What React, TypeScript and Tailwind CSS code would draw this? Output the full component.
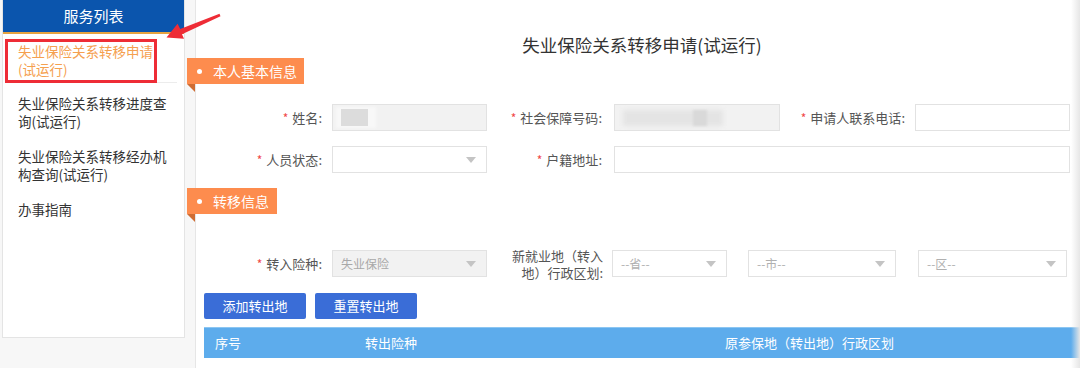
const FONT = "font-['Noto_Sans_CJK_SC',sans-serif]";

function Label({ text, star = true, className = '' }: { text: string; star?: boolean; className?: string }) {
  return (
    <div className={`flex shrink-0 items-center justify-end text-[13px] leading-[16px] text-[#555] ${className}`}>
      {star && <span className="mr-[4px] text-[12px] text-[#f04848]">*</span>}
      <span>{text}:</span>
    </div>
  );
}

function Caret() {
  return (
    <span className="h-0 w-0 border-x-[5px] border-t-[6px] border-x-transparent border-t-[#c4c4c4]" />
  );
}

function Select({ text, disabled = false, className = '' }: { text?: string; disabled?: boolean; className?: string }) {
  return (
    <div
      className={`flex h-[27px] shrink-0 items-center justify-between border border-[#e2e2e2] pl-[8px] pr-[10px] text-[12px] ${
        disabled ? 'bg-[#f2f2f2] text-[#a8a8a8]' : 'bg-white text-[#b0b0b0]'
      } ${className}`}
    >
      <span>{text}</span>
      <Caret />
    </div>
  );
}

function Tag({ text, width }: { text: string; width: string }) {
  return (
    <div className="-ml-[17px] flex flex-col">
      <div className={`flex h-[26px] items-center bg-[#fd8c4e] pl-[10px] text-[14px] text-white ${width}`}>
        <span className="h-[5px] w-[5px] rounded-full bg-white" />
        <span className="ml-[11px] leading-none">{text}</span>
      </div>
      <div className="h-0 w-0 border-t-[8px] border-l-[8px] border-t-[#cf6c33] border-l-transparent" />
    </div>
  );
}

const MENU = [
  '失业保险关系转移进度查询(试运行)',
  '失业保险关系转移经办机构查询(试运行)',
  '办事指南',
];

export default function App() {
  return (
    <div className={`relative flex h-[368px] w-[1080px] overflow-hidden bg-[#f7f7f7] ${FONT}`}>
      <aside className="relative ml-[2px] h-[338px] w-[183px] shrink-0 border-x border-b border-[#e4e4e4] bg-white">
        <div className="flex h-[34px] items-center justify-center border-b-2 border-[#e6a341] bg-[#0b55ad] text-[15px] text-white">
          服务列表
        </div>
        <div className="mx-[7px] border-b border-[#ececec] pt-[8px] pb-[4px] pl-[8px] pr-[9px] text-[13.5px] leading-[18px] text-[#f5a04f]">
          失业保险关系转移申请(试运行)
        </div>
        <div className="mt-[11px] flex flex-col gap-[17px] pl-[15px] pr-[16px] text-[13.5px] leading-[18px] text-[#333]">
          {MENU.map((m) => (
            <div key={m}>{m}</div>
          ))}
        </div>
        <div className="absolute left-[2px] top-[39px] h-[44px] w-[152px] border-[3px] border-[#ee2c36]" />
      </aside>

      <main className="ml-[10px] flex flex-1 flex-col border-l border-[#e6e6e6] bg-white pl-[8px]">
        <h1 className="pt-[34px] text-center text-[17.5px] leading-[22px] text-[#333]">
          失业保险关系转移申请(试运行)
        </h1>

        <div className="mt-[2px]">
          <Tag text="本人基本信息" width="w-[117px]" />
        </div>

        <div className="mt-[12px] flex h-[27px] items-center">
          <Label text="姓名" className="w-[128px] pr-[10px]" />
          <div className="relative h-[27px] w-[155px] shrink-0 border border-[#e2e2e2] bg-[#f2f2f2]">
            <div className="absolute left-[3px] top-[2px] h-[21px] w-[40px] bg-[#f8f8f8] blur-[1px]" />
            <div className="absolute left-[8px] top-[4px] h-[17px] w-[27px] bg-[#dcdcdc]" />
          </div>
          <Label text="社会保障号码" className="w-[127px] pr-[12px]" />
          <div className="relative h-[27px] w-[166px] shrink-0 border border-[#e2e2e2] bg-[#f2f2f2]">
            <div className="absolute left-[8px] top-[5px] h-[16px] w-[100px] bg-[#e4e4e4] blur-[2px]" />
            <div className="absolute left-[78px] top-[5px] h-[16px] w-[14px] bg-[#d9d9d9] blur-[1px]" />
          </div>
          <Label text="申请人联系电话" className="w-[135px] pr-[10px]" />
          <div className="h-[27px] w-[155px] shrink-0 border border-[#e2e2e2] bg-white" />
        </div>

        <div className="mt-[15px] flex h-[27px] items-center">
          <Label text="人员状态" className="w-[128px] pr-[10px]" />
          <Select className="w-[155px]" />
          <Label text="户籍地址" className="w-[127px] pr-[12px]" />
          <div className="h-[27px] w-[456px] shrink-0 border border-[#e2e2e2] bg-white" />
        </div>

        <div className="mt-[15px]">
          <Tag text="转移信息" width="w-[90px]" />
        </div>

        <div className="mt-[28px] flex h-[27px] items-center">
          <Label text="转入险种" className="w-[128px] pr-[10px]" />
          <Select text="失业保险" disabled className="w-[155px]" />
          <div className="flex w-[125px] shrink-0 flex-col items-end pr-[9px] text-[13px] leading-[17px] text-[#555]">
            <span>新就业地（转入</span>
            <span>地）行政区划:</span>
          </div>
          <Select text="--省--" className="w-[115px]" />
          <Select text="--市--" className="ml-[21px] w-[148px]" />
          <Select text="--区--" className="ml-[22px] w-[149px]" />
        </div>

        <div className="mt-[16px] flex gap-[9px]">
          <button className="h-[26px] w-[102px] rounded-[2px] bg-[#3a6dd7] text-[13px] text-white">添加转出地</button>
          <button className="h-[26px] w-[102px] rounded-[2px] bg-[#3a6dd7] text-[13px] text-white">重置转出地</button>
        </div>

        <div className="mt-[8px] flex h-[31px] items-center border-t border-[#8cc6f2] bg-[#5dacec] text-[13px] text-white">
          <span className="w-[161px] pl-[11px]">序号</span>
          <span className="w-[360px]">转出险种</span>
          <span>原参保地（转出地）行政区划</span>
        </div>
      </main>

      <div className="pointer-events-none absolute right-0 top-0 h-full w-[9px] bg-linear-to-r from-white/0 to-[#e6e6e6]" />

      <svg className="pointer-events-none absolute left-0 top-0 h-[50px] w-[240px]" viewBox="0 0 240 50">
        <polygon
          points="219.5,13.8 220.5,16.2 182,34.2 184,38.8 166.5,37.5 177.6,23.8 180.2,29"
          fill="#ee2c36"
        />
      </svg>
    </div>
  );
}
